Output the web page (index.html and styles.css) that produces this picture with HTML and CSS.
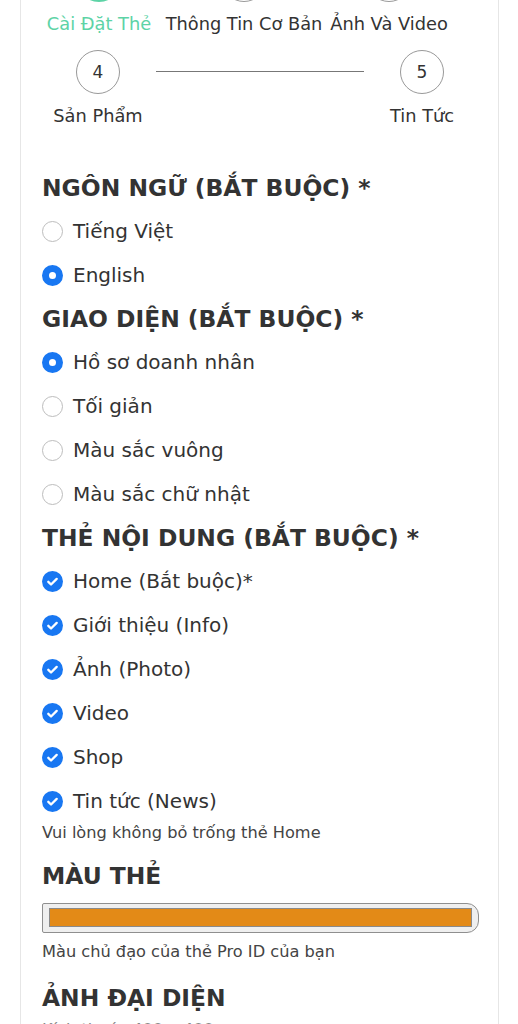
FILE: index.html
```html
<!DOCTYPE html>
<html lang="vi">
<head>
<meta charset="utf-8">
<title>Cài Đặt Thẻ</title>
<link rel="stylesheet" href="styles.css">
</head>
<body>
<div class="card">
  <div class="steps steps-top">
    <div class="step active"><div class="circle" aria-label="Bước 1"></div><div class="step-label">Cài Đặt Thẻ</div></div>
    <div class="step"><div class="circle" aria-label="Bước 2"></div><div class="step-label">Thông Tin Cơ Bản</div></div>
    <div class="step"><div class="circle" aria-label="Bước 3"></div><div class="step-label">Ảnh Và Video</div></div>
  </div>
  <div class="steps steps-bottom">
    <div class="step"><div class="circle">4</div><div class="step-label">Sản Phẩm</div></div>
    <div class="connector"></div>
    <div class="step"><div class="circle">5</div><div class="step-label">Tin Tức</div></div>
  </div>

  <h2 class="section-title first">NGÔN NGỮ (BẮT BUỘC) *</h2>
  <ul class="options">
    <li class="option"><span class="radio"></span>Tiếng Việt</li>
    <li class="option"><span class="radio checked"></span>English</li>
  </ul>

  <h2 class="section-title">GIAO DIỆN (BẮT BUỘC) *</h2>
  <ul class="options">
    <li class="option"><span class="radio checked"></span>Hồ sơ doanh nhân</li>
    <li class="option"><span class="radio"></span>Tối giản</li>
    <li class="option"><span class="radio"></span>Màu sắc vuông</li>
    <li class="option"><span class="radio"></span>Màu sắc chữ nhật</li>
  </ul>

  <h2 class="section-title">THẺ NỘI DUNG (BẮT BUỘC) *</h2>
  <ul class="options">
    <li class="option"><span class="check"><svg viewBox="0 0 20 20"><path d="M6 10.3l2.6 2.6L14 7.5"/></svg></span>Home (Bắt buộc)*</li>
    <li class="option"><span class="check"><svg viewBox="0 0 20 20"><path d="M6 10.3l2.6 2.6L14 7.5"/></svg></span>Giới thiệu (Info)</li>
    <li class="option"><span class="check"><svg viewBox="0 0 20 20"><path d="M6 10.3l2.6 2.6L14 7.5"/></svg></span>Ảnh (Photo)</li>
    <li class="option"><span class="check"><svg viewBox="0 0 20 20"><path d="M6 10.3l2.6 2.6L14 7.5"/></svg></span>Video</li>
    <li class="option"><span class="check"><svg viewBox="0 0 20 20"><path d="M6 10.3l2.6 2.6L14 7.5"/></svg></span>Shop</li>
    <li class="option"><span class="check"><svg viewBox="0 0 20 20"><path d="M6 10.3l2.6 2.6L14 7.5"/></svg></span>Tin tức (News)</li>
  </ul>
  <p class="help help-home">Vui lòng không bỏ trống thẻ Home</p>

  <h2 class="section-title spaced">MÀU THẺ</h2>
  <div class="color-input"><div class="swatch"></div></div>
  <p class="help help-color">Màu chủ đạo của thẻ Pro ID của bạn</p>

  <h2 class="section-title spaced2">ẢNH ĐẠI DIỆN</h2>
  <p class="help help-avatar">Kích thước 400 x 400 px</p>
</div>
</body>
</html>
```

FILE: styles.css
```css
* { box-sizing: border-box; }
html, body { margin: 0; padding: 0; background: #fff; }
body {
  font-family: "DejaVu Sans", "Noto Sans", sans-serif;
  color: #333;
  overflow: hidden;
}
.card {
  margin: -42px 0 0 20px;
  width: 479px;
  border-left: 1px solid #e6e6e6;
  border-right: 1px solid #e6e6e6;
  padding: 0 20px 40px 21px;
  min-height: 1200px;
}
.steps { display: flex; align-items: flex-start; }
.steps-top { gap: 33px; padding-left: 1px; }
.steps-bottom { margin-top: 14px; }
.step {
  width: 112px;
  flex: none;
  display: flex;
  flex-direction: column;
  align-items: center;
}
.circle {
  width: 44px; height: 44px;
  border: 1px solid #999;
  border-radius: 50%;
  display: flex; align-items: center; justify-content: center;
  font-size: 17px;
  line-height: 1;
  color: #333;
  background: #fff;
}
.step.active .circle { border: 3px solid #5dd3a6; }
.step-label {
  margin-top: 10px;
  font-size: 17.8px;
  line-height: 24px;
  white-space: nowrap;
  color: #333;
}
.steps-bottom .step-label { margin-top: 10px; }
.step.active .step-label { color: #5dd3a6; }
.connector {
  flex: 1;
  height: 1px;
  background: #777;
  margin: 21px 2px 0;
}
.section-title {
  margin: 7px 0 6px;
  font-size: 23.4px;
  line-height: 30px;
  font-weight: 700;
  color: #333;
}
.section-title.first { margin-top: 45px; }
.section-title.spaced { margin-top: 19px; margin-bottom: 12px; }
.section-title.spaced2 { margin-top: 22px; margin-bottom: 0; }
.options { list-style: none; margin: 0; padding: 0; }
.option {
  height: 44px;
  display: flex;
  align-items: center;
  font-size: 20px;
  color: #333;
}
.radio {
  width: 21px; height: 21px;
  border: 1px solid #bdbdbd;
  border-radius: 50%;
  margin-right: 10px;
  flex: none;
  background: #fff;
}
.radio.checked {
  border: 7px solid #1877f2;
  background: #fff;
}
.check {
  width: 21px; height: 21px;
  border-radius: 50%;
  background: #1877f2;
  margin-right: 10px;
  flex: none;
  display: flex;
}
.check svg { width: 21px; height: 21px; fill: none; stroke: #fff; stroke-width: 2.2; stroke-linecap: round; stroke-linejoin: round; }
.help {
  margin: 0;
  font-size: 16.2px;
  line-height: 18px;
  color: #444;
}
.help-home { margin-top: 1px; }
.help-color { margin-top: 10px; }
.help-avatar { margin-top: 8px; color: #888; }
.color-input {
  width: 437px;
  height: 30px;
  border: 1px solid #8f8f8f;
  border-radius: 2px 12px 12px 2px;
  background: #efefef;
  padding: 4px 6px 5px 6px;
}
.swatch {
  height: 100%;
  background: #e38a17;
  border: 1px solid #8a8a8a;
}
```
